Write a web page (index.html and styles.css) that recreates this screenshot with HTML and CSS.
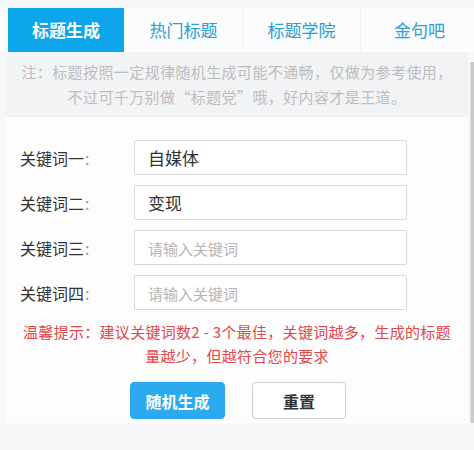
FILE: index.html
```html
<!DOCTYPE html>
<html lang="zh-CN">
<head>
  <meta charset="utf-8">
  <meta name="viewport" content="width=device-width, initial-scale=1">
  <title>标题生成</title>
  <link rel="stylesheet" href="styles.css">
</head>
<body>
  <div class="tabs">
    <div class="tab active">标题生成</div>
    <div class="tab">热门标题</div>
    <div class="tab">标题学院</div>
    <div class="tab last">金句吧</div>
  </div>

  <div class="main">
    <div class="panel">
      <p class="notice">注：标题按照一定规律随机生成可能不通畅，仅做为参考使用，<br>不过可千万别做“标题党”哦，好内容才是王道。</p>

      <div class="form">
        <div class="row">
          <label>关键词一<span class="colon">:</span></label>
          <input class="field" type="text" value="自媒体" placeholder="请输入关键词">
        </div>
        <div class="row">
          <label>关键词二<span class="colon">:</span></label>
          <input class="field" type="text" value="变现" placeholder="请输入关键词">
        </div>
        <div class="row">
          <label>关键词三<span class="colon">:</span></label>
          <input class="field" type="text" placeholder="请输入关键词">
        </div>
        <div class="row">
          <label>关键词四<span class="colon">:</span></label>
          <input class="field" type="text" placeholder="请输入关键词">
        </div>

        <p class="tip">温馨提示：建议关键词数2 - 3个最佳，关键词越多，生成的标题<br>量越少，但越符合您的要求</p>

        <div class="actions">
          <button class="btn primary">随机生成</button>
          <button class="btn">重置</button>
        </div>
      </div>
    </div>
    <div class="scrollbar"></div>
  </div>
</body>
</html>
```

FILE: styles.css
```css
*, :after, :before { box-sizing: border-box; }
body {
  margin: 0;
  padding-top: 8px;
  background-color: #f7f8fa;
  color: #333;
  font-family: "Noto Sans CJK SC", "Microsoft YaHei", sans-serif;
  font-size: 16px;
}

.tabs {
  display: flex;
  height: 44px;
  padding-left: 8px;
  background-color: #fbfcfd;
}
.tab {
  width: 118px;
  line-height: 44px;
  text-align: center;
  font-size: 17px;
  color: #2b9fd3;
  border-right: 1px solid #eef0f3;
}
.tab.active {
  width: 117px;
  background-color: #0ea6ea;
  color: #fff;
  font-weight: bold;
}
.tab.last {
  flex: 1;
  padding-left: 4px;
  border-right: none;
}

.main {
  display: flex;
}
.panel {
  flex: 1;
  padding-left: 6px;
}
.scrollbar {
  width: 4px;
  margin-top: 10px;
  margin-left: 2px;
  background-color: #cbcbcd;
  border-left: 1px solid #dcdcde;
}

.notice {
  margin: 0;
  padding: 7px 0 8px;
  background-color: #f2f3f5;
  color: #bdbdbd;
  font-size: 15px;
  line-height: 25px;
  text-align: center;
  letter-spacing: 0.4px;
}

.form {
  height: 306px;
  padding-top: 23px;
  background-color: #fdfdfe;
}

.row {
  display: flex;
  align-items: center;
  margin-bottom: 10px;
}
.row label {
  width: 128px;
  padding-left: 14px;
  font-size: 16px;
  color: #333;
}
.row .colon {
  color: #999;
  margin-left: 1px;
}
.field {
  width: 273px;
  height: 35px;
  padding: 0 13px;
  border: 1px solid #d9d9d9;
  border-radius: 1px;
  background-color: #fff;
  font-family: inherit;
  font-size: 17px;
  color: #333;
  outline: none;
}
.field::placeholder {
  font-size: 15px;
  color: #b5b5b5;
}

.tip {
  margin: 1px 0 0;
  color: #e34848;
  font-size: 15px;
  line-height: 24px;
  text-align: center;
  letter-spacing: 0.3px;
}

.actions {
  display: flex;
  justify-content: center;
  gap: 27px;
  margin-top: 14px;
  padding-left: 2px;
}
.btn {
  width: 94px;
  height: 37px;
  border: 1px solid #cfcfcf;
  border-radius: 4px;
  background-color: #fff;
  font-family: inherit;
  font-size: 16px;
  font-weight: bold;
  color: #333;
  cursor: pointer;
}
.btn.primary {
  width: 95px;
  border-color: #2aa7ee;
  background-color: #2caaf0;
  color: #fff;
}
```
